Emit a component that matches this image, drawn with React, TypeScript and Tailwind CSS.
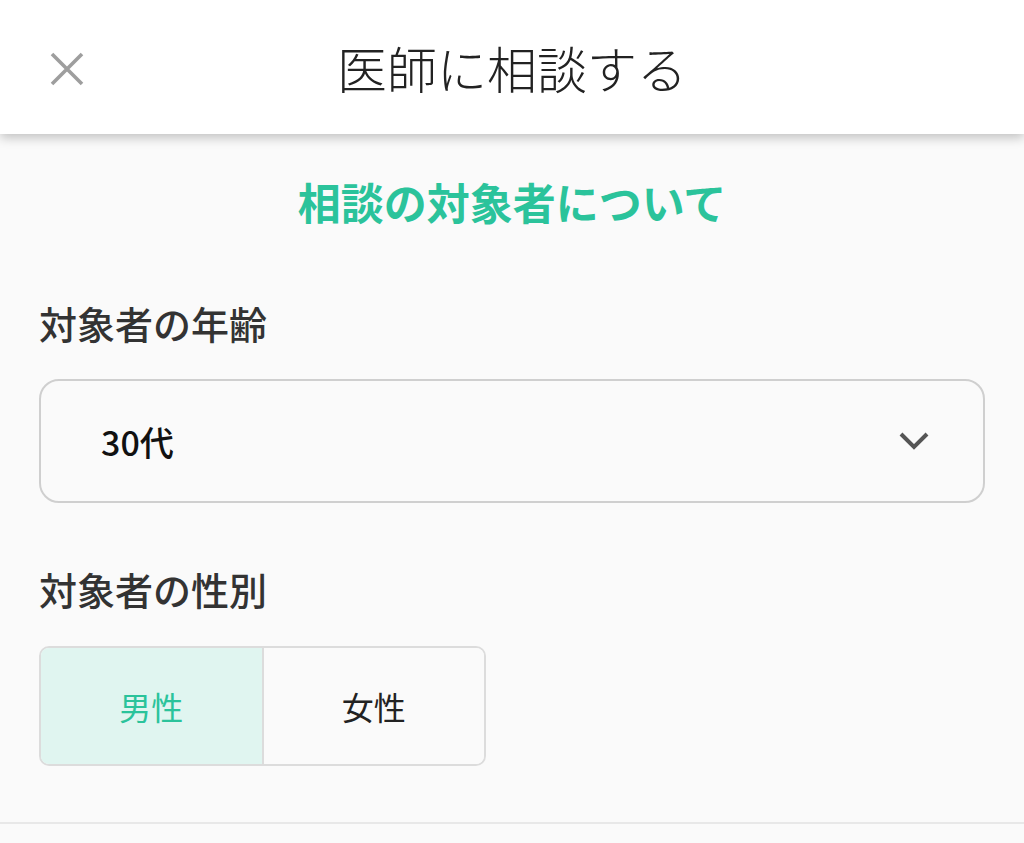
import React, { useState } from 'react';

const FONT = '"Noto Sans CJK JP", "Noto Sans", sans-serif';

export default function App() {
  const [gender, setGender] = useState<'male' | 'female'>('male');

  return (
    <div className="min-h-[843px] w-full bg-[#fafafa] overflow-hidden" style={{ fontFamily: FONT }}>
      {/* header */}
      <header className="relative z-10 flex h-[134px] items-center justify-center bg-white shadow-[0_4px_10px_rgba(0,0,0,0.22)]">
        <button className="absolute left-[44px] top-[46px] p-[6px]" aria-label="閉じる">
          <svg width="34" height="34" viewBox="0 0 34 34" fill="none">
            <path d="M2 2L32 32M32 2L2 32" stroke="#9e9e9e" strokeWidth="3.6" />
          </svg>
        </button>
        <h1 className="text-[50px] font-light leading-none text-[#222]">医師に相談する</h1>
      </header>

      <main className="px-[39px]">
        <h2 className="mt-[36px] text-center text-[43px] font-bold leading-[63px] text-[#2bc39b]">
          相談の対象者について
        </h2>

        <p className="mt-[64px] text-[38px] font-medium leading-[52px] text-[#333]">対象者の年齢</p>

        <div className="mt-[30px] flex h-[124px] items-center justify-between rounded-[20px] border-2 border-[#cfcfcf] bg-[#fafafa] pl-[60px] pr-[54px]">
          <span className="text-[34px] font-medium text-[#111]">30代</span>
          <svg width="30" height="18" viewBox="0 0 30 18" fill="none">
            <path d="M2 2L15 15L28 2" stroke="#555" strokeWidth="4" />
          </svg>
        </div>

        <p className="mt-[60px] text-[38px] font-medium leading-[52px] text-[#333]">対象者の性別</p>

        <div className="mt-[31px] flex h-[120px] w-[447px] overflow-hidden rounded-[10px] border-2 border-[#dcdcdc]">
          <button
            onClick={() => setGender('male')}
            className={
              gender === 'male'
                ? 'flex flex-1 items-center justify-center border-r-2 border-[#dcdcdc] bg-[#e0f5f0] text-[32px] text-[#2bc39b]'
                : 'flex flex-1 items-center justify-center border-r-2 border-[#dcdcdc] bg-[#fafafa] text-[32px] text-[#222]'
            }
          >
            男性
          </button>
          <button
            onClick={() => setGender('female')}
            className={
              gender === 'female'
                ? 'flex flex-1 items-center justify-center bg-[#e0f5f0] text-[32px] text-[#2bc39b]'
                : 'flex flex-1 items-center justify-center bg-[#fafafa] text-[32px] text-[#222]'
            }
          >
            女性
          </button>
        </div>
      </main>

      <div className="mt-[56px] h-[2px] w-full bg-[#e8e8e8]" />
    </div>
  );
}
